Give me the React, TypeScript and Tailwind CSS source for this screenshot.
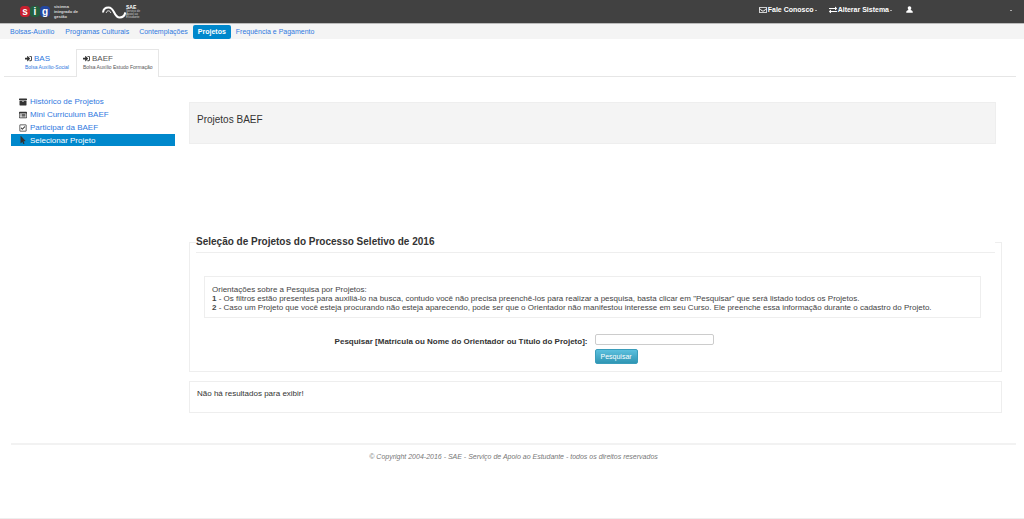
import React from "react";
import {
  FaArchive,
  FaExchangeAlt,
  FaMousePointer,
  FaRegCheckSquare,
  FaRegEnvelope,
  FaSignInAlt,
} from "react-icons/fa";

const sections = ["Bolsas-Auxílio", "Programas Culturais", "Contemplações", "Projetos", "Frequência e Pagamento"];

function ListIcon({ className }: { className?: string }) {
  return (
    <svg className={className} viewBox="0 0 16 16" fill="currentColor" aria-hidden="true">
      <path
        fillRule="evenodd"
        d="M1.500 1.500H14.500Q16 1.500 16 3V13Q16 14.500 14.500 14.500H1.500Q0 14.500 0 13V3Q0 1.500 1.500 1.500ZM1.300 5V13.200H14.700V5Z"
      />
      <path d="M3 6.200H4.500V7.500H3ZM5.500 6.200H13V7.500H5.500ZM3 8.600H4.500V9.900H3ZM5.500 8.600H13V9.900H5.500ZM3 11H4.500V12.300H3ZM5.500 11H13V12.300H5.500Z" />
    </svg>
  );
}

function UserIcon({ className }: { className?: string }) {
  return (
    <svg className={className} viewBox="0 0 14 14" fill="currentColor" aria-hidden="true">
      <path d="M7 0.500C9.200 0.500 10.500 2 10.500 4C10.500 5.800 9.700 7.300 8.800 8C11.500 8.800 13.500 9.500 13.500 12V13.500H0.500V12C0.500 9.500 2.500 8.800 5.200 8C4.300 7.300 3.500 5.800 3.500 4C3.500 2 4.800 0.500 7 0.500Z" />
    </svg>
  );
}

const menu = [
  { label: "Histórico de Projetos", Icon: FaArchive },
  { label: "Mini Curriculum BAEF", Icon: ListIcon },
  { label: "Participar da BAEF", Icon: FaRegCheckSquare },
  { label: "Selecionar Projeto", Icon: FaMousePointer },
];

function Caret() {
  return <span className="mt-px h-px w-[2px] bg-[#aaa]" />;
}

function SigLogo() {
  return (
    <div className="flex items-center gap-1 text-white">
      <div className="flex text-[10px] leading-[11px] font-bold">
        <span className="w-[10px] rounded-[4px] bg-[#c8202f] text-center">s</span>
        <span className="w-[10px] rounded-[4px] bg-[#23603f] text-center">i</span>
        <span className="w-[10px] rounded-[4px] bg-[#2347a0] text-center">g</span>
      </div>
      <div className="text-[4px] leading-[5px] font-bold text-[#ddd]">
        <div>sistema</div>
        <div>integrado de</div>
        <div>gestão</div>
      </div>
    </div>
  );
}

function SaeLogo() {
  return (
    <div className="flex items-end">
      <svg className="h-[13px] w-6" viewBox="0 0 24 13" fill="none" stroke="#fff" aria-hidden="true">
        <path
          d="M1 6.500C1.300 3.500 3.500 1.500 6.500 1.500C9.800 1.500 11 4 12.200 6.500C13.500 9.300 14.800 11.500 17.800 11.500C21 11.500 22.800 9.500 23.200 6.500"
          strokeWidth="2"
        />
        <path d="M4.200 7C4.500 5.500 5.300 4.800 6.500 4.800C7.700 4.800 8.300 5.600 8.800 7" strokeWidth="0.8" />
      </svg>
      <div className="text-[#ccc]">
        <div className="text-[5px] leading-[5px] font-bold text-white">SAE</div>
        <div className="text-[3px] leading-[3px]">
          <div>Serviço de</div>
          <div>Apoio ao</div>
          <div>Estudante</div>
        </div>
      </div>
    </div>
  );
}

export default function App() {
  return (
    <div className="flex min-h-screen flex-col border-b border-[#eee] bg-white font-['Liberation_Sans',Arial,sans-serif] text-[8px] leading-[9px] text-[#333]">
      <header className="flex h-6 items-center justify-between border-b border-[#bbb] bg-[#414141] pr-3 pl-5">
        <div className="flex items-center gap-6">
          <SigLogo />
          <SaeLogo />
        </div>
        <div className="flex items-center pb-1 text-[7px] font-bold text-white">
          <a href="#contato" className="mr-3 flex items-center gap-px">
            <FaRegEnvelope className="size-2" />
            Fale Conosco
            <Caret />
          </a>
          <a href="#sistema" className="mr-[14px] flex items-center gap-px">
            <FaExchangeAlt className="size-2" />
            Alterar Sistema
            <Caret />
          </a>
          <a href="#usuario" aria-label="Usuário" className="flex w-[106px] items-center justify-between">
            <UserIcon className="size-[7px]" />
            <Caret />
          </a>
        </div>
      </header>

      <nav className="flex h-[15px] items-center bg-[#f4f4f4] px-1 text-[7px]">
        {sections.map((s) => (
          <a
            key={s}
            href="#"
            className={
              s === "Projetos"
                ? "rounded-[2px] bg-[#0088cc] px-[5px] leading-[14px] font-bold text-white"
                : "px-[5px] leading-[14px] text-[#3079e0] first:px-[6px]"
            }
          >
            {s}
          </a>
        ))}
      </nav>

      <div className="mt-[10px] mr-2 ml-1 flex h-7 border-b border-[#e6e6e6] pl-[14px]">
        <a href="#bas" className="w-[58px] px-[7px] pt-[5px] text-[5px] leading-[9px] whitespace-nowrap text-[#3079e0]">
          <span className="flex items-center gap-[2px] text-[8px]">
            <FaSignInAlt className="size-[7px] text-[#333]" />
            BAS
          </span>
          Bolsa Auxílio-Social
        </a>
        <a
          href="#baef"
          className="-mb-px border border-b-0 border-[#e6e6e6] bg-white px-[6px] pt-1 text-[5px] leading-[9px] whitespace-nowrap text-[#555]"
        >
          <span className="flex items-center gap-[2px] text-[8px]">
            <FaSignInAlt className="size-[7px] text-[#333]" />
            BAEF
          </span>
          Bolsa Auxílio Estudo Formação
        </a>
      </div>

      <div className="flex pr-[22px] pl-[11px]">
        <aside className="mt-[18px] w-[164px] shrink-0">
          {menu.map(({ label, Icon }) => {
            const active = label === "Selecionar Projeto";
            return (
              <a
                key={label}
                href="#"
                className={
                  active
                    ? "flex h-3 items-center gap-[3px] bg-[#0088cc] pl-2 text-white"
                    : "flex h-[13px] items-center gap-[3px] pl-2 text-[#3079e0]"
                }
              >
                <Icon className="size-2 text-[#333]" />
                {label}
              </a>
            );
          })}
        </aside>

        <main className="ml-[14px] min-w-0 flex-1">
          <h1 className="mt-[25px] mr-[6px] h-[42px] border border-[#eee] bg-[#f4f4f4] px-[7px] pt-3 text-[10px] leading-[10px]">
            Projetos BAEF
          </h1>

          <fieldset className="mt-[88px] border border-[#eee] px-[6px] pb-[7px]">
            <legend className="w-full border-b border-[#eee] py-1 text-[10px] leading-3 font-bold">
              Seleção de Projetos do Processo Seletivo de 2016
            </legend>
            <div className="mt-[23px] mr-[14px] ml-2 border border-[#eee] px-[7px] pt-2 pb-[5px] text-[#444]">
              <p>Orientações sobre a Pesquisa por Projetos:</p>
              <p>
                <b>1</b> - Os filtros estão presentes para auxiliá-lo na busca, contudo você não precisa preenchê-los para
                realizar a pesquisa, basta clicar em "Pesquisar" que será listado todos os Projetos.
              </p>
              <p>
                <b>2</b> - Caso um Projeto que você esteja procurando não esteja aparecendo, pode ser que o Orientador não
                manifestou interesse em seu Curso. Ele preenche essa informação durante o cadastro do Projeto.
              </p>
            </div>
            <form className="mt-4 grid grid-cols-[49%_1fr] gap-x-[7px]" onSubmit={(e) => e.preventDefault()}>
              <label htmlFor="busca" className="flex justify-end pt-[3px] font-bold whitespace-nowrap">
                Pesquisar [Matrícula ou Nome do Orientador ou Título do Projeto]:
              </label>
              <div className="flex flex-col items-start gap-1">
                <input id="busca" type="text" className="h-[11px] w-[119px] rounded-[2px] border border-[#ccc] px-1" />
                <button
                  type="submit"
                  className="h-[15px] rounded-[2px] border border-[#3a9dbb] bg-linear-to-b from-[#5bc0de] to-[#2f96b4] px-[5px] text-[7px] leading-[9px] text-white"
                >
                  Pesquisar
                </button>
              </div>
            </form>
          </fieldset>

          <section className="mt-[9px] h-8 border border-[#eee] px-[7px] pt-[7px]">Não há resultados para exibir!</section>
        </main>
      </div>

      <footer className="mt-[30px] mr-2 ml-[11px] border-t-2 border-[#f2f2f2] pt-[7px] text-center text-[7px] text-[#777] italic">
        © Copyright 2004-2016 - SAE - Serviço de Apoio ao Estudante - todos os direitos reservados
      </footer>
    </div>
  );
}
